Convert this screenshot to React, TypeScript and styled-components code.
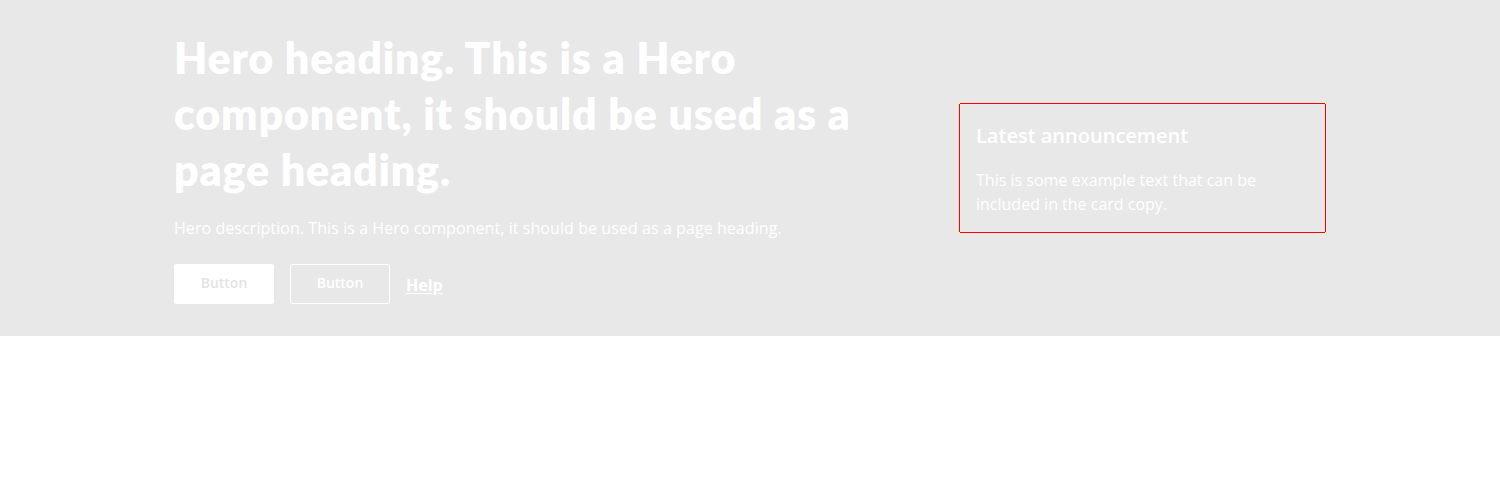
import * as React from "react";
import styled, { createGlobalStyle } from "styled-components";

const GlobalStyle = createGlobalStyle`
    body {
        margin: 0;
        background: #ffffff;
        font-family: "Open Sans", "Liberation Sans", sans-serif;
    }
`;

const HeroSection = styled.section`
    background: #e8e8e8;
    padding: 32px 0;
`;

const HeroInner = styled.div`
    max-width: 1152px;
    margin: 0 auto;
    display: flex;
    align-items: center;
    justify-content: space-between;
`;

const HeroContent = styled.div`
    width: 720px;
`;

const HeroHeading = styled.h1`
    margin: -2px 0 0;
    font-family: "Lato", "Open Sans", sans-serif;
    font-weight: 800;
    font-size: 43px;
    letter-spacing: 0.8px;
    line-height: 56px;
    color: #ffffff;
`;

const HeroDescription = styled.p`
    margin: 18px 0 0;
    font-size: 16px;
    line-height: 24px;
    letter-spacing: 0.07px;
    color: #ffffff;
`;

const Actions = styled.div`
    margin-top: 24px;
    display: flex;
    align-items: center;
    gap: 16px;
`;

const Button = styled.button<{ variant: "primary" | "secondary" }>`
    width: 100px;
    height: 40px;
    border-radius: 2px;
    font-family: "Open Sans", sans-serif;
    font-size: 14px;
    font-weight: 600;
    line-height: 18px;
    padding: 0 0 2px;
    cursor: pointer;
    background: ${ p => p.variant === "primary" ? "#ffffff" : "transparent" };
    color: ${ p => p.variant === "primary" ? "#e4e4e4" : "#ffffff" };
    border: 1px solid #ffffff;
`;

const HelpLink = styled.a`
    font-size: 16px;
    font-weight: 700;
    color: #ffffff;
    text-decoration: underline;
    text-underline-offset: 2px;
    margin-top: 2px;
`;

const Card = styled.div`
    position: relative;
    width: 367px;
    box-sizing: border-box;
    padding: 16px 16px 16px;
    border: 1px solid #ff0000;

    &::before {
        content: "";
        position: absolute;
        inset: -1px;
        pointer-events: none;
        background:
            linear-gradient(#ffff00, #ffff00) top left / 1px 1px no-repeat,
            linear-gradient(#ffff00, #ffff00) top right / 1px 1px no-repeat,
            linear-gradient(#ffff00, #ffff00) bottom left / 1px 1px no-repeat,
            linear-gradient(#ffff00, #ffff00) bottom right / 1px 1px no-repeat;
    }
`;

const CardTitle = styled.h2`
    margin: 0;
    font-size: 20px;
    font-weight: 600;
    line-height: 32px;
    color: #ffffff;
`;

const CardText = styled.p`
    margin: 16px 0 0;
    font-size: 16px;
    line-height: 24px;
    color: #ffffff;
`;

export default function App() {
    return <>
        <GlobalStyle />
        <HeroSection>
            <HeroInner>
                <HeroContent>
                    <HeroHeading>Hero heading. This is a Hero component, it should be used as a page heading.</HeroHeading>
                    <HeroDescription>Hero description. This is a Hero component, it should be used as a page heading.</HeroDescription>
                    <Actions>
                        <Button variant="primary">Button</Button>
                        <Button variant="secondary">Button</Button>
                        <HelpLink href="#">Help</HelpLink>
                    </Actions>
                </HeroContent>
                <Card>
                    <CardTitle>Latest announcement</CardTitle>
                    <CardText>This is some example text that can be included in the card copy.</CardText>
                </Card>
            </HeroInner>
        </HeroSection>
    </>;
}
